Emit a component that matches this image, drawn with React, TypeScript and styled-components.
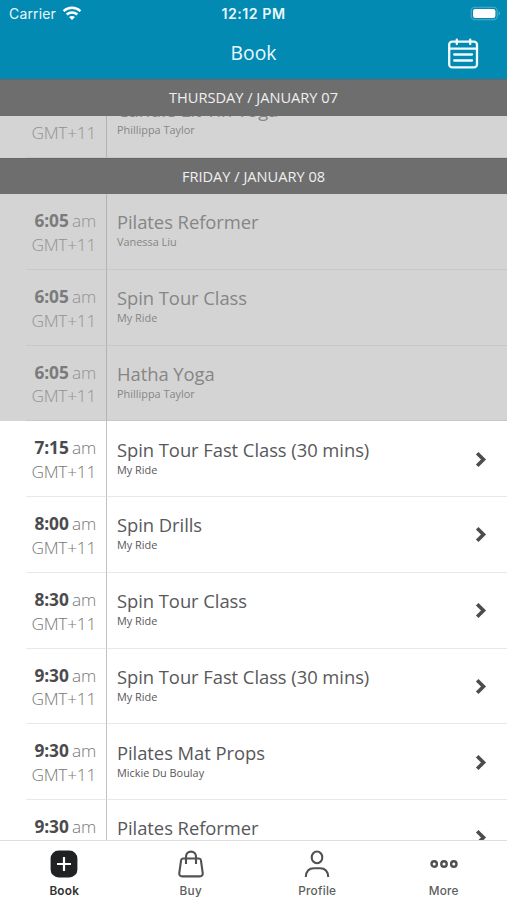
import React from "react";
import styled, { createGlobalStyle, css } from "styled-components";

const Global = createGlobalStyle`
  *, *::before, *::after { box-sizing: border-box; }
  body { margin: 0; background: #fff; }
`;

const Screen = styled.div`
  display: flex;
  flex-direction: column;
  width: 507px;
  height: 900px;
  overflow: hidden;
  background: #fff;
  color: #58585a;
  font-family: "Open Sans", "Noto Sans", sans-serif;
`;

const Header = styled.header`
  flex: none;
  height: 79px;
  background: #028ab2;
  color: #e9f8fc;
`;

const StatusBar = styled.div`
  display: grid;
  grid-template-columns: 1fr auto 1fr;
  align-items: center;
  height: 27px;
  padding: 0 6px 0 9px;
  font-family: Inter, sans-serif;
  font-size: 14px;
  line-height: 27px;
`;

const Carrier = styled.div`
  display: flex;
  align-items: center;
  gap: 6px;
  letter-spacing: 0.15px;
`;

const Clock = styled.div`
  font-weight: 600;
  font-size: 14.2px;
  letter-spacing: 0.5px;
  margin-right: 3px;
`;

const BatterySlot = styled.div`
  display: flex;
  justify-content: flex-end;
`;

const NavBar = styled.div`
  display: grid;
  grid-template-columns: 1fr auto 1fr;
  align-items: center;
  height: 51px;
  padding-right: 28px;
  padding-left: 28px;
`;

const NavTitle = styled.h1`
  grid-column: 2;
  margin: 0;
  font-size: 19.3px;
  font-weight: 400;
  line-height: 52px;
`;

const CalendarButton = styled.button`
  justify-self: end;
  display: flex;
  padding: 0;
  border: 0;
  background: none;
  color: inherit;
`;

const DateBar = styled.div`
  flex: none;
  height: 36.5px;
  background: #6e6e6e;
  color: #f0f0f0;
  font-size: 14.6px;
  line-height: 34.6px;
  text-align: center;
  border-top: 1px solid #676767;
`;

const List = styled.main`
  flex: 1;
  min-height: 0;
  overflow: hidden;
`;

const Scrolled = styled.div`
  margin-top: -33.6px;
`;

const Row = styled.div<{ $past?: boolean }>`
  display: flex;
  height: 75.75px;
  background: #fff;
  ${(p) =>
    p.$past &&
    css`
      background: #d4d4d4;
      color: #868686;
    `}
`;

const TimeCell = styled.div<{ $past?: boolean }>`
  flex: none;
  width: 81px;
  margin-left: 26px;
  padding: 15px 10px 0 0;
  border-right: 1px solid ${(p) => (p.$past ? "#b3b3b3" : "#c2c2c2")};
  border-bottom: 1px solid ${(p) => (p.$past ? "#c8c8c8" : "#e8e8e8")};
  text-align: right;
  font-size: 17.3px;
  font-weight: 300;
  letter-spacing: -0.25px;
  line-height: 23.6px;
  white-space: nowrap;
  color: ${(p) => (p.$past ? "#929292" : "#777")};
`;

const Hour = styled.b<{ $past?: boolean }>`
  margin-right: 3.4px;
  font-weight: 700;
  letter-spacing: -0.1px;
  color: ${(p) => (p.$past ? "#7b7b7b" : "#4b4b4d")};
`;

const Info = styled.div<{ $past?: boolean }>`
  flex: 1;
  display: flex;
  justify-content: space-between;
  padding: 15.3px 20px 0 10px;
  border-bottom: 1px solid ${(p) => (p.$past ? "#c8c8c8" : "#e8e8e8")};
`;

const ClassName = styled.div`
  font-size: 18.4px;
  letter-spacing: -0.05px;
  line-height: 25px;
`;

const Teacher = styled.div`
  font-size: 10.9px;
  line-height: 15px;
`;

const Arrow = styled.svg`
  margin-top: 14px;
`;

const TabBar = styled.nav`
  flex: none;
  display: grid;
  grid-template-columns: repeat(4, 1fr);
  height: 60px;
  padding-left: 1px;
  border-top: 1px solid #dedede;
  background: #fff;
`;

const Tab = styled.div<{ $active?: boolean }>`
  display: flex;
  flex-direction: column;
  align-items: center;
  padding-top: 8.5px;
  font-family: Inter, sans-serif;
  font-size: 11.8px;
  font-weight: ${(p) => (p.$active ? 600 : 500)};
  letter-spacing: 0.22px;
  line-height: 16px;
  color: ${(p) => (p.$active ? "#2f3133" : "#5c5e60")};

  svg { margin-bottom: 5.5px; }
`;

type Session = { time: string; name: string; teacher: string; past?: boolean };

const thursday: Session[] = [
  { time: "6:05", name: "Candle Lit Yin Yoga", teacher: "Phillippa Taylor", past: true },
];

const friday: Session[] = [
  { time: "6:05", name: "Pilates Reformer", teacher: "Vanessa Liu", past: true },
  { time: "6:05", name: "Spin Tour Class", teacher: "My Ride", past: true },
  { time: "6:05", name: "Hatha Yoga", teacher: "Phillippa Taylor", past: true },
  { time: "7:15", name: "Spin Tour Fast Class (30 mins)", teacher: "My Ride" },
  { time: "8:00", name: "Spin Drills", teacher: "My Ride" },
  { time: "8:30", name: "Spin Tour Class", teacher: "My Ride" },
  { time: "9:30", name: "Spin Tour Fast Class (30 mins)", teacher: "My Ride" },
  { time: "9:30", name: "Pilates Mat Props", teacher: "Mickie Du Boulay" },
  { time: "9:30", name: "Pilates Reformer", teacher: "Vanessa Liu" },
];

function SessionRow({ time, name, teacher, past }: Session) {
  return (
    <Row $past={past}>
      <TimeCell $past={past}>
        <div><Hour $past={past}>{time}</Hour>am</div>
        <div>GMT+11</div>
      </TimeCell>
      <Info $past={past}>
        <div>
          <ClassName>{name}</ClassName>
          <Teacher>{teacher}</Teacher>
        </div>
        {!past && (
          <Arrow width="12" height="17" viewBox="0 0 12 17" fill="none">
            <path d="M2.2 2.2L8.5 8.5L2.2 14.8" stroke="#4c4c4e" strokeWidth="3.6" />
          </Arrow>
        )}
      </Info>
    </Row>
  );
}

const WifiIcon = () => (
  <svg width="20" height="15" viewBox="0 0 20 15" fill="none" stroke="#fff">
    <path d="M1.6 5.2C6.4 .7 13.6 .7 18.4 5.2" strokeWidth="2.5" />
    <path d="M4.7 8.5C7.7 5.8 12.3 5.8 15.3 8.5" strokeWidth="2.4" />
    <path d="M7 11C8.7 9.5 11.3 9.5 13 11L10 14Z" fill="#fff" stroke="none" />
  </svg>
);

const BatteryIcon = () => (
  <svg width="31" height="15" viewBox="0 0 31 15" fill="none">
    <rect x="1.2" y="1.2" width="26" height="12.6" rx="3.8" stroke="#50adca" strokeWidth="1.1" />
    <rect x="3" y="3" width="22.4" height="9" rx="2.2" fill="#fff" />
    <path d="M28.7 5.5C30.5 6 30.5 9 28.7 9.5Z" fill="#50adca" />
  </svg>
);

const CalendarIcon = () => (
  <svg width="31" height="31" viewBox="0 0 31 31" fill="none" stroke="#f2fcff" strokeWidth="2.3">
    <rect x="1.2" y="3.6" width="27.8" height="25.8" rx="3" />
    <path d="M1.5 10.6H29M8.8 1.6V6M22.2 1.6V6M6.2 16.5H24M6.2 22.5H24" strokeLinecap="round" />
  </svg>
);

const BookIcon = () => (
  <svg width="28" height="28" viewBox="0 0 28 28">
    <rect x=".6" y=".6" width="26.8" height="26.8" rx="8" fill="#1f2123" />
    <path d="M14 7V21M7 14H21" stroke="#fff" strokeWidth="2.2" />
  </svg>
);

const BuyIcon = () => (
  <svg width="28" height="28" viewBox="0 0 28 28" fill="none" stroke="#4f5153" strokeWidth="2.1">
    <path d="M6 8.5H22C23.2 8.5 23.7 9 23.9 10.2L25.7 22.8C26 25 25 26.4 22.8 26.4H5.2C3 26.4 2 25 2.3 22.8L4.1 10.2C4.3 9 4.8 8.5 6 8.5Z" />
    <path d="M9 14V6.8C9 3.8 11 1.6 14 1.6S19 3.8 19 6.8V14" />
  </svg>
);

const ProfileIcon = () => (
  <svg width="28" height="28" viewBox="0 0 28 28" fill="none" stroke="#4f5153" strokeWidth="2.1">
    <ellipse cx="14" cy="7.4" rx="5.3" ry="5.9" />
    <path d="M2.8 27C3 21.5 6 18.2 11 18.2H17C22 18.2 25 21.5 25.2 27" />
  </svg>
);

const MoreIcon = () => (
  <svg width="28" height="28" viewBox="0 0 28 28" fill="none" stroke="#4f5153" strokeWidth="2.4">
    <circle cx="4.2" cy="14" r="2.7" />
    <circle cx="14" cy="14" r="2.7" />
    <circle cx="23.8" cy="14" r="2.7" />
  </svg>
);

export default function App() {
  return (
    <Screen>
      <Global />
      <Header>
        <StatusBar>
          <Carrier>Carrier <WifiIcon /></Carrier>
          <Clock>12:12 PM</Clock>
          <BatterySlot><BatteryIcon /></BatterySlot>
        </StatusBar>
        <NavBar>
          <NavTitle>Book</NavTitle>
          <CalendarButton aria-label="Calendar"><CalendarIcon /></CalendarButton>
        </NavBar>
      </Header>
      <DateBar>THURSDAY / JANUARY 07</DateBar>
      <List>
        <Scrolled>
          {thursday.map((s, i) => <SessionRow key={i} {...s} />)}
          <DateBar>FRIDAY / JANUARY 08</DateBar>
          {friday.map((s, i) => <SessionRow key={i} {...s} />)}
        </Scrolled>
      </List>
      <TabBar>
        <Tab $active><BookIcon />Book</Tab>
        <Tab><BuyIcon />Buy</Tab>
        <Tab><ProfileIcon />Profile</Tab>
        <Tab><MoreIcon />More</Tab>
      </TabBar>
    </Screen>
  );
}
